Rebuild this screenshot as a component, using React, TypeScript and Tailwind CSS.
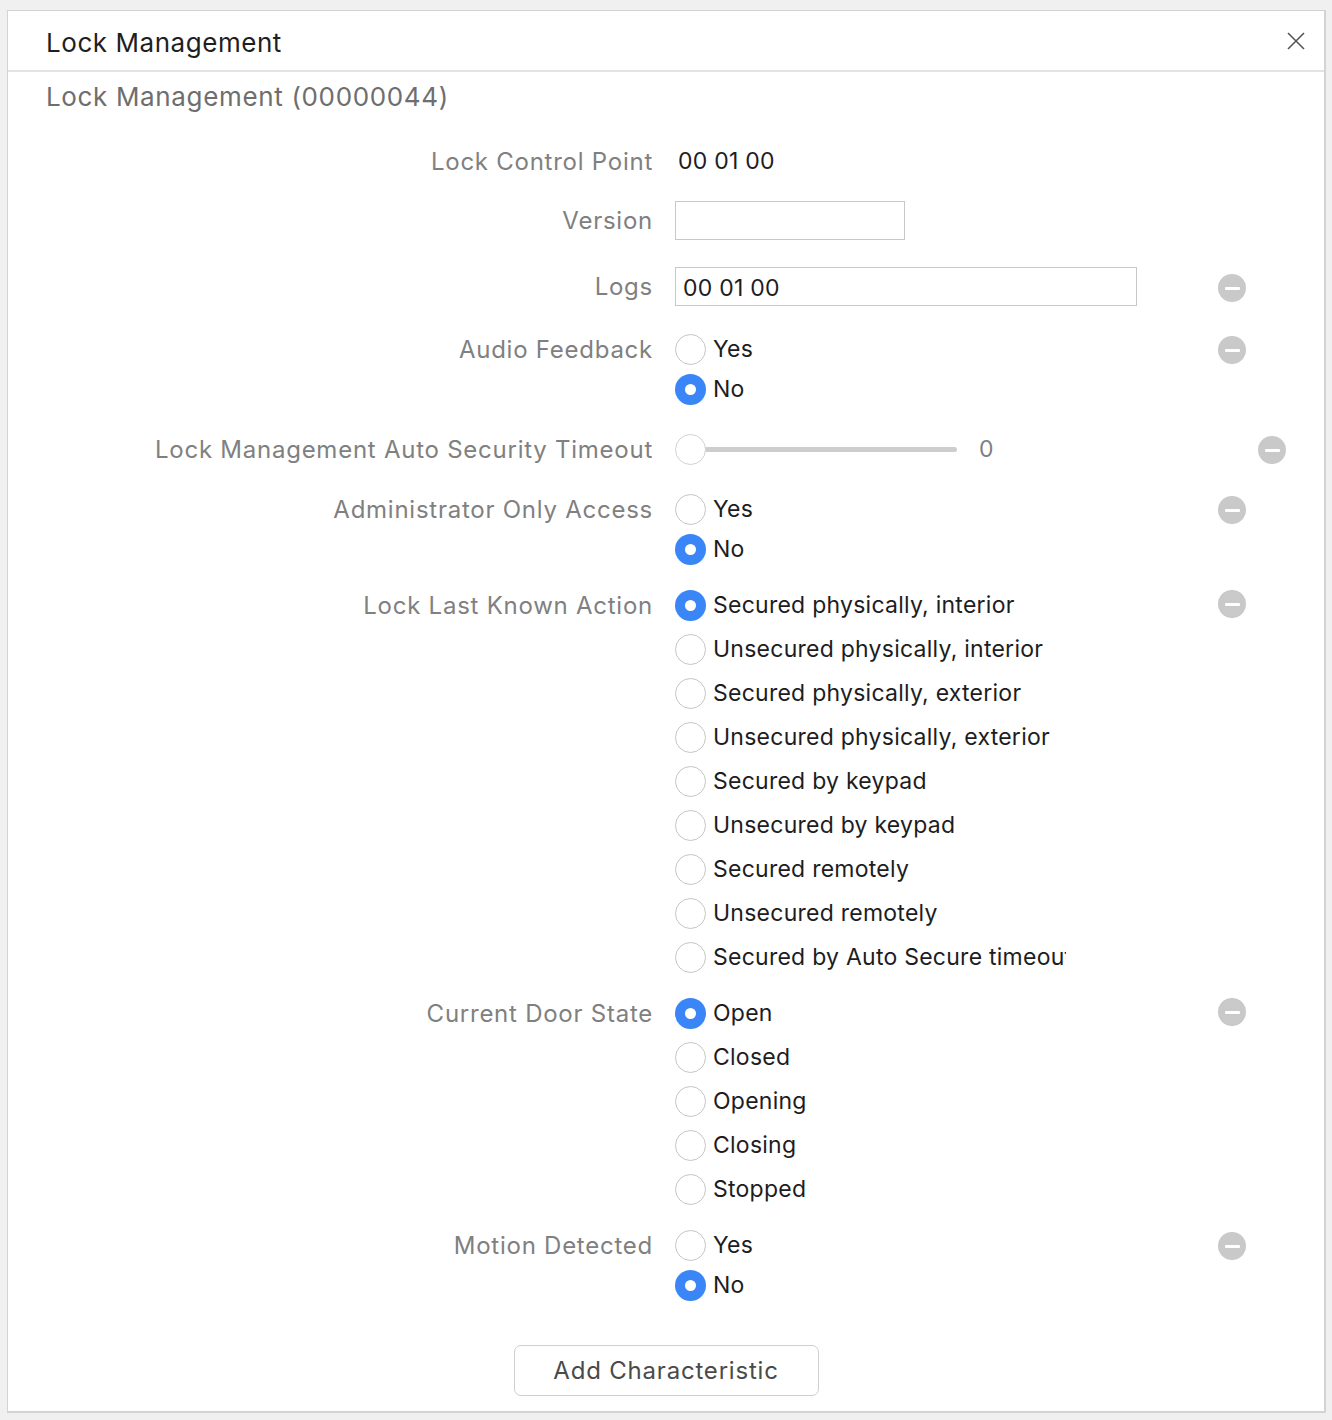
import React from 'react';

type Opt = { label: string; on?: boolean };

function Minus() {
    return (
        <div className="w-[28px] h-[28px] rounded-full bg-[#c9c9c9] flex items-center justify-center mt-[7px]">
            <div className="w-[15px] h-[3px] bg-white rounded-[1px]"></div>
        </div>
    );
}

function Radio({ opt, tall }: { opt: Opt; tall?: boolean }) {
    return (
        <div className={tall ? "flex items-center h-[44px]" : "flex items-center h-[40px]"}>
            {opt.on ? (
                <span className="shrink-0 w-[31px] h-[31px] rounded-full bg-[#3a86f7] flex items-center justify-center">
                    <span className="w-[11px] h-[11px] rounded-full bg-white"></span>
                </span>
            ) : (
                <span className="shrink-0 w-[31px] h-[31px] rounded-full border border-[#c6c6c6] bg-white"></span>
            )}
            <span className="ml-[7px] whitespace-nowrap overflow-hidden w-[353px] text-[#1d1d1f]">{opt.label}</span>
        </div>
    );
}

function Row({ label, h, children, minus = true, wide, className }: { label: string; h: string; children: React.ReactNode; minus?: boolean; wide?: boolean; className?: string }) {
    return (
        <div className={"flex items-start " + (className ?? "")}>
            <div className={"w-[645px] shrink-0 text-right text-[#808080] text-[24px] tracking-[0.75px] flex items-center justify-end pt-[1px] " + h}>{label}</div>
            <div className={wide ? "ml-[22px] w-[583px] shrink-0" : "ml-[22px] w-[543px] shrink-0"}>{children}</div>
            {minus && <Minus />}
        </div>
    );
}

function RadioGroup({ opts, tall }: { opts: Opt[]; tall?: boolean }) {
    return (
        <div className="flex flex-col">
            {opts.map((o) => <Radio key={o.label} opt={o} tall={tall} />)}
        </div>
    );
}

const yesNo: Opt[] = [{ label: 'Yes' }, { label: 'No', on: true }];

const lastAction: Opt[] = [
    { label: 'Secured physically, interior', on: true },
    { label: 'Unsecured physically, interior' },
    { label: 'Secured physically, exterior' },
    { label: 'Unsecured physically, exterior' },
    { label: 'Secured by keypad' },
    { label: 'Unsecured by keypad' },
    { label: 'Secured remotely' },
    { label: 'Unsecured remotely' },
    { label: 'Secured by Auto Secure timeout' },
];

const doorState: Opt[] = [
    { label: 'Open', on: true },
    { label: 'Closed' },
    { label: 'Opening' },
    { label: 'Closing' },
    { label: 'Stopped' },
];

export default function App() {
    return (
        <div className="w-[1332px] h-[1420px] bg-[#f0f0f0] pt-[10px] pl-[7px] font-['Inter',sans-serif] text-[23px] tracking-[0.25px]">
            <div className="w-[1319px] h-[1403px] bg-white border border-[#d3d3d3] border-r-2 border-b-2 flex flex-col">
                {/* header */}
                <div className="h-[61px] border-b-2 border-[#e3e3e3] flex items-center justify-between pl-[38px] pr-[18px]">
                    <h1 className="text-[26px] tracking-[0.55px] text-[#1f1f1f] pt-[3px]">Lock Management</h1>
                    <svg width="20" height="20" viewBox="0 0 20 20" className="text-[#555]">
                        <path d="M2 2 L18 18 M18 2 L2 18" stroke="currentColor" strokeWidth="1.6" fill="none" />
                    </svg>
                </div>

                <div className="pl-[38px] h-[49px] flex items-center text-[26px] tracking-[0.65px] text-[#6e6e6e]">Lock Management (00000044)</div>

                <Row label="Lock Control Point" h="h-[40px]" minus={false} className="mt-[20px]">
                    <div className="h-[40px] flex items-center pl-[3px] text-[#1d1d1f]">00 01 00</div>
                </Row>

                <Row label="Version" h="h-[39px]" minus={false} className="mt-[20px]">
                    <div className="w-[230px] h-[39px] border border-[#c8c8c8]"></div>
                </Row>

                <Row label="Logs" h="h-[39px]" className="mt-[27px]">
                    <div className="w-[462px] h-[39px] border border-[#c8c8c8] flex items-center pl-[7px] pt-[3px] text-[#1d1d1f]">00 01 00</div>
                </Row>

                <Row label="Audio Feedback" h="h-[40px]" className="mt-[23px]">
                    <RadioGroup opts={yesNo} />
                </Row>

                <Row label="Lock Management Auto Security Timeout" h="h-[40px]" wide className="mt-[20px]">
                    <div className="h-[40px] flex items-center">
                        <div className="relative w-[282px] h-[31px] flex items-center">
                            <div className="absolute left-[15px] right-0 h-[5px] rounded-full bg-[#cdcdcd]"></div>
                            <div className="relative w-[31px] h-[31px] rounded-full bg-white border border-[#d2d2d2]"></div>
                        </div>
                        <span className="ml-[22px] text-[#808080]">0</span>
                    </div>
                </Row>

                <Row label="Administrator Only Access" h="h-[40px]" className="mt-[20px]">
                    <RadioGroup opts={yesNo} />
                </Row>

                <Row label="Lock Last Known Action" h="h-[44px]" className="mt-[14px]">
                    <RadioGroup opts={lastAction} tall />
                </Row>

                <Row label="Current Door State" h="h-[44px]" className="mt-[12px]">
                    <RadioGroup opts={doorState} tall />
                </Row>

                <Row label="Motion Detected" h="h-[40px]" className="mt-[14px]">
                    <RadioGroup opts={yesNo} />
                </Row>

                <div className="flex justify-center mt-[40px]">
                    <button className="w-[305px] h-[51px] rounded-[7px] border border-[#cfcfcf] bg-white text-[#4a4a4a] text-[24px] tracking-[0.8px]">Add Characteristic</button>
                </div>
            </div>
        </div>
    );
}
